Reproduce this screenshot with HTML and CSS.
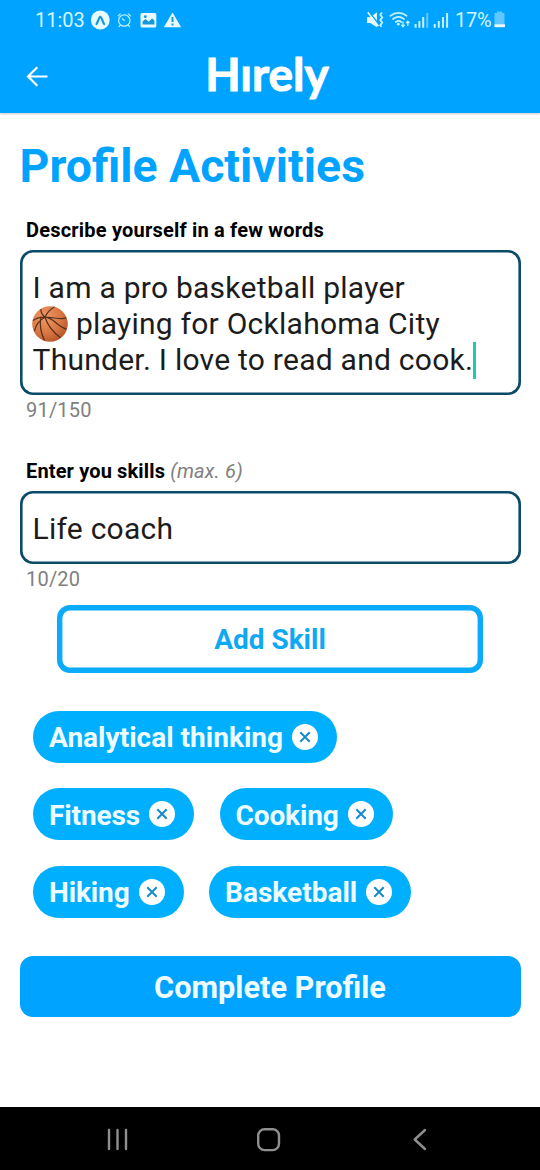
FILE: index.html
```html
<!DOCTYPE html>
<html lang="en">
<head>
<meta charset="utf-8">
<title>Hirely – Profile Activities</title>
<link rel="stylesheet" href="styles.css">
</head>
<body>
<div class="screen">
  <header class="header">
    <div class="status">
      <span class="clock">11:03</span>
      <svg class="status-left" width="92" height="24" viewBox="90 8 92 24" fill="none">
        <circle cx="100.3" cy="20" r="9.4" fill="#e8faff"/>
        <path d="M96.5 24c1.700-2.500 2.500-7.200 3.800-7.200s2.100 4.700 3.800 7.200" stroke="#1299dc" stroke-width="2.200" stroke-linecap="round"/>
        <g stroke="#b5f0ff" stroke-width="1.200" stroke-linecap="round">
          <circle cx="124.300" cy="20.500" r="5.700"/>
          <path d="M124.300 20.500l-2-1.800M118.300 15.800l2-1.900M130.300 15.800l-2-1.900M120.500 25l-1.500 1.600M128.100 25l1.500 1.600"/>
        </g>
        <rect x="140.500" y="13" width="15.800" height="14.600" rx="1.500" fill="#e8faff"/>
        <path d="M142.600 24.500v-3l3-2.400 3 2.600 3.500-3.300 2.300 2v4.100z" fill="#1299dc"/>
        <circle cx="145.300" cy="16.700" r="1.400" fill="#1299dc"/>
        <path d="M172.500 12.500l8.700 14.700h-17.400z" fill="#e8faff"/>
        <path d="M172.500 17v5M172.500 23.600v2" stroke="#1299dc" stroke-width="2"/>
      </svg>
      <svg class="status-right" width="84" height="24" viewBox="366 8 84 24" fill="none">
        <path d="M367 17.300h3.200l6.700-5v15l-6.700-4.300h-3.200z" fill="#e8faff"/>
        <path d="M369 11.500l10.500 14" stroke="#00a3ff" stroke-width="1.400"/>
        <path d="M367.800 12.200l10.600 14" stroke="#e8faff" stroke-width="1.500"/>
        <path d="M382 12.500l-1.700 2.300 2 2.600-2 2.600 2 2.600-2 2.600 1.200 1.500" stroke="#c4f3ff" stroke-width="1.800"/>
        <g stroke="#c4f3ff" stroke-width="1.700" stroke-linecap="round">
          <path d="M390.300 15.800c5-4 11.600-4 16.400 0M393 19c3.500-2.800 7.500-2.800 11 0M395.800 22c1.800-1.300 3.800-1.300 5.500 0"/>
        </g>
        <circle cx="398.300" cy="24.200" r="1.400" fill="#c4f3ff"/>
        <path d="M403 21.500v5M401.300 24.800l1.700 2 1.700-2M407.800 26v-4.500M406.100 23.200l1.700-2 1.700 2" stroke="#c4f3ff" stroke-width="1.300"/>
        <path d="M415.600 24v3.800M419.400 21v6.800M423.200 17v10.800M434.700 24v3.800M438.800 21v6.800M443 17v10.800M447.100 13v14.800" stroke="#c4f3ff" stroke-width="2"/>
        <path d="M427.200 13v14.800" stroke="#62c6ff" stroke-width="2"/>
      </svg>
      <span class="percent">17%</span>
      <svg class="battery" width="12" height="18" viewBox="0 0 12 18">
        <path d="M3 2V.500h5V2h2.500v14.500H.500V2z" fill="#62c6ff"/>
        <path d="M.500 13.300h10.500v2.700h-10.500z" fill="#e8faff"/>
      </svg>
    </div>
    <div class="appbar">
      <svg class="back" width="24" height="24" viewBox="0 0 24 24" fill="none" stroke="#fff" stroke-width="2.200">
        <path d="M12.300 2.300L3 11.500l9.300 9.200M3 11.500H22.500"/>
      </svg>
      <div class="logo">Hırely</div>
    </div>
  </header>

  <main class="content">
    <h1 class="title">Profile Activities</h1>

    <div class="label">Describe yourself in a few words</div>
    <div class="field bio">
      <div class="line">I am a pro basketball player</div>
      <div class="line"><svg class="ball" width="36" height="36" viewBox="0 0 36 36">
        <defs><radialGradient id="ball" cx=".35" cy=".3" r=".75"><stop offset="0" stop-color="#ef9862"/><stop offset=".6" stop-color="#d97844"/><stop offset="1" stop-color="#b9552a"/></radialGradient></defs>
        <circle cx="18" cy="18" r="17.800" fill="url(#ball)"/>
        <g fill="none" stroke="#54301f" stroke-width="1.200">
          <path d="M1 14.500c3-2 7-3.300 12-3.300s10 1 14 1.300 6 0 7-1M9 3c-.500 2.500 1.500 6 4 8.300M22.500 1c-3.500 1.500-8 6-9.500 10.200C7.500 14 4 18 2.500 25M13 11.200c3 9 8 15 15.500 20.500M13 11.200c9 .300 11 9 21.500 12M9 10.500c-1.500 8-1 15 3.500 24"/>
        </g></svg><span>playing for Ocklahoma City</span></div>
      <div class="line">Thunder. I love to read and cook.<span class="caret"></span></div>
    </div>
    <div class="counter">91/150</div>

    <div class="label second">Enter you skills <em>(max. 6)</em></div>
    <div class="field skill"><div class="line">Life coach</div></div>
    <div class="counter">10/20</div>

    <div class="add">Add Skill</div>

    <div class="chips">
      <div class="chip wide"><span>Analytical thinking</span><svg class="x" viewBox="0 0 26 26"><circle cx="13" cy="13" r="13"/><path d="M8.300 8.300l9.400 9.400M17.700 8.300l-9.400 9.400"/></svg></div>
      <div class="chip"><span>Fitness</span><svg class="x" viewBox="0 0 26 26"><circle cx="13" cy="13" r="13"/><path d="M8.300 8.300l9.400 9.400M17.700 8.300l-9.400 9.400"/></svg></div>
      <div class="chip"><span>Cooking</span><svg class="x" viewBox="0 0 26 26"><circle cx="13" cy="13" r="13"/><path d="M8.300 8.300l9.400 9.400M17.700 8.300l-9.400 9.400"/></svg></div>
      <div class="chip"><span>Hiking</span><svg class="x" viewBox="0 0 26 26"><circle cx="13" cy="13" r="13"/><path d="M8.300 8.300l9.400 9.400M17.700 8.300l-9.400 9.400"/></svg></div>
      <div class="chip wide"><span>Basketball</span><svg class="x" viewBox="0 0 26 26"><circle cx="13" cy="13" r="13"/><path d="M8.300 8.300l9.400 9.400M17.700 8.300l-9.400 9.400"/></svg></div>
    </div>

    <div class="complete">Complete Profile</div>
  </main>

  <nav class="navbar">
    <svg width="24" height="24" viewBox="0 0 24 24" fill="none" stroke="#8f8f8f" stroke-width="2.400" stroke-linecap="round"><path d="M3 2v19M11.500 2v19M20 2v19"/></svg>
    <svg width="24" height="24" viewBox="0 0 24 24" fill="none" stroke="#8f8f8f" stroke-width="2.400"><rect x="1.200" y="1.300" width="20.800" height="20.800" rx="6.300"/></svg>
    <svg width="24" height="24" viewBox="0 0 24 24" fill="none" stroke="#8f8f8f" stroke-width="2.400" stroke-linecap="round" stroke-linejoin="round"><path d="M17 2L6.700 11.500 17 21"/></svg>
  </nav>
</div>
</body>
</html>
```
FILE: styles.css
```css
* { box-sizing: border-box; }
body { margin: 0; background: #fff; font-family: Roboto, sans-serif; }
.screen { width: 540px; height: 1170px; display: flex; flex-direction: column; overflow: hidden; }

.header { height: 113px; flex: none; background: #00a3ff; box-shadow: 0 1px 2px rgba(0, 0, 0, .22); }
.status { height: 40px; padding: 0 34px 0 35px; display: flex; align-items: center; color: #d4f6ff; font-size: 20px; line-height: 24px; }
.clock { width: 55px; }
.status-right { margin-left: auto; }
.percent { margin-left: 5px; width: 36px; white-space: nowrap; letter-spacing: -.3px; }
.battery { margin-left: 3px; }
.appbar { height: 73px; display: grid; grid-template-columns: 60px 1fr 66px; align-items: center; }
.back { margin-left: 24.500px; }
.logo { justify-self: center; padding-bottom: 6px; color: #fff; font: 700 46px/54px Lato, sans-serif; white-space: nowrap; -webkit-text-stroke: 1px #fff; }

.content { flex: 1; padding: 26px 19.5px 0; }
.title { margin: 0; color: #00a3ff; font-size: 46.400px; line-height: 54px; font-weight: 700; white-space: nowrap; }
.label { margin: 25px 0 0 6.500px; font-size: 20px; line-height: 24px; font-weight: 700; letter-spacing: .2px; color: #000; white-space: nowrap; }
.label.second { margin-top: 37px; letter-spacing: .14px; }
.label em { font-weight: 400; color: #808080; }
.field { box-shadow: inset 0 0 0 2.600px #0b4a68; border-radius: 13px; padding-left: 13px; color: #1c1c1c; font-size: 30px; line-height: 36px; letter-spacing: .25px; }
.bio { margin-top: 7.500px; height: 145px; padding-top: 20px; }
.skill { margin-top: 7.500px; height: 73px; padding-top: 20px; }
.line { height: 36px; white-space: nowrap; display: flex; }
.ball { flex: none; margin: 0 8.500px 0 -1px; }
.caret { width: 3px; height: 37px; background: #1dc8b5; }
.counter { margin: 3.500px 0 0 6.500px; font-size: 20px; line-height: 24px; letter-spacing: .2px; color: #808080; }

.add { width: 426px; height: 67.500px; margin: 14px auto 0; box-shadow: inset 0 0 0 5.400px #0aabfa; border-radius: 13px; color: #0fa8f2; font-size: 28px; line-height: 70px; font-weight: 700; text-align: center; }
.chips { margin: 38.500px 0 0 13.500px; display: flex; flex-wrap: wrap; gap: 25.800px 25.500px; width: 400px; }
.chip { height: 51.700px; padding: 0 19px 0 16px; border-radius: 26px; background: #00b0ff; color: #eefcff; display: flex; align-items: center; gap: 9px; font-size: 28px; line-height: 34px; font-weight: 700; letter-spacing: -.12px; white-space: nowrap; }
.chip.wide { letter-spacing: .02px; }
.chip span { padding-top: 3px; }
.x { width: 26px; height: 26px; flex: none; }
.x circle { fill: #fff; }
.x path { fill: none; stroke: #1689cc; stroke-width: 2; }
.complete { margin-top: 38.500px; height: 61px; border-radius: 13px; background: #00a3ff; color: #eefcff; font-size: 30.700px; line-height: 63px; font-weight: 700; text-align: center; }

.navbar { height: 63px; flex: none; background: #000; padding: 2px 108px 0 106px; display: flex; justify-content: space-between; align-items: center; }
```
